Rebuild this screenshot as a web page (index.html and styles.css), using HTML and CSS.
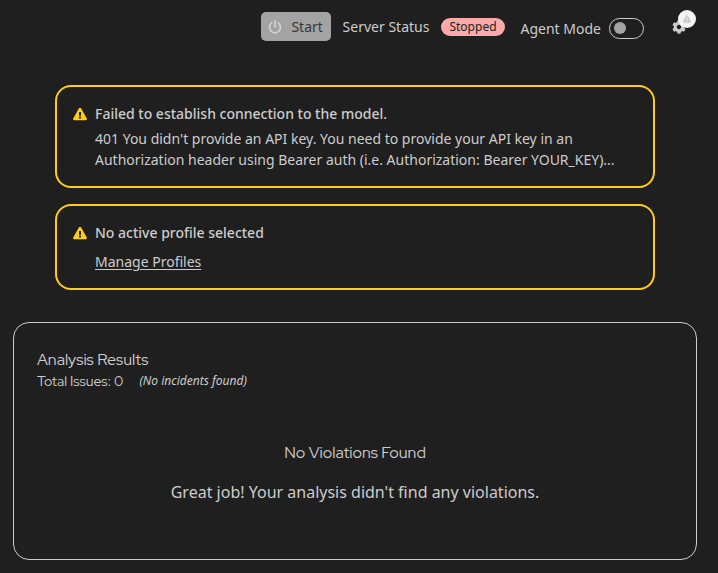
FILE: index.html
```html
<!DOCTYPE html>
<html lang="en">
<head>
<meta charset="utf-8">
<title>Analysis</title>
<link rel="stylesheet" href="styles.css">
</head>
<body>
<header class="toolbar">
  <button class="start" disabled>
    <svg class="power" viewBox="0 0 14 14"><path fill="none" stroke="currentColor" stroke-width="1.700" stroke-linecap="round" d="M3.700 2.900A5.500 5.500 0 1 0 10.300 2.900M7 .9V7"/></svg>
    <span>Start</span>
  </button>
  <span class="status-label">Server Status</span>
  <span class="badge">Stopped</span>
  <span class="agent-label">Agent Mode</span>
  <span class="switch"><span class="knob"></span></span>
  <span class="settings">
    <svg class="gear" viewBox="0 0 512 512"><path fill="currentColor" d="M487.400 315.700l-42.600-24.600c4.300-23.200 4.300-47 0-70.200l42.600-24.600c4.900-2.800 7.100-8.600 5.500-14-11.100-35.600-30-67.800-54.700-94.600-3.800-4.100-10-5.100-14.800-2.300L380.800 110c-17.900-15.400-38.500-27.300-60.800-35.100V25.800c0-5.600-3.900-10.500-9.400-11.700-36.700-8.200-74.300-7.800-109.200 0-5.500 1.200-9.400 6.100-9.400 11.700V75c-22.200 7.900-42.800 19.800-60.800 35.100L88.700 85.500c-4.900-2.800-11-1.900-14.800 2.300-24.700 26.700-43.600 58.900-54.700 94.600-1.700 5.400.6 11.200 5.500 14L67.300 221c-4.300 23.200-4.300 47 0 70.200l-42.600 24.600c-4.900 2.800-7.100 8.600-5.500 14 11.100 35.600 30 67.800 54.700 94.600 3.800 4.100 10 5.100 14.800 2.300l42.600-24.600c17.900 15.400 38.500 27.300 60.800 35.100v49.200c0 5.600 3.900 10.500 9.400 11.700 36.700 8.200 74.300 7.800 109.200 0 5.500-1.200 9.400-6.100 9.400-11.700v-49.200c22.200-7.900 42.800-19.800 60.800-35.100l42.600 24.600c4.900 2.800 11 1.900 14.800-2.300 24.700-26.700 43.600-58.900 54.700-94.600 1.500-5.500-.7-11.300-5.600-14.100zM256 336c-44.100 0-80-35.900-80-80s35.900-80 80-80 80 35.900 80 80-35.900 80-80 80z"/></svg>
    <span class="notice"><svg viewBox="0 0 10 10"><path d="M5 1.500C6.200 3.300 8.300 6 8.300 7.800Q8.300 8.600 7.500 8.600H2.500Q1.700 8.600 1.700 7.800C1.700 6 3.800 3.300 5 1.500Z" fill="#c9c9c9" stroke="#c9c9c9" stroke-width="1" stroke-linejoin="round"/><path d="M5 3.500V6M5 7V8" stroke="#f5f5f5" stroke-width="1"/></svg></span>
  </span>
</header>
<main>
  <section class="alert first">
    <svg class="warn" viewBox="0 0 576 512"><path fill="currentColor" d="M569.500 440C588 472 564.800 512 527.900 512H48.100c-36.900 0-60-40.100-41.600-72L246.400 24c18.500-32 64.700-32 83.200 0l239.900 416zM288 354c-25.400 0-46 20.600-46 46s20.600 46 46 46 46-20.600 46-46-20.600-46-46-46zm-43.700-165.300l7.400 136c.4 6.400 5.600 11.300 12 11.300h48.500c6.400 0 11.600-5 12-11.300l7.400-136c.4-6.900-5.100-12.700-12-12.700h-63.400c-6.900 0-12.300 5.800-11.900 12.700z"/></svg>
    <div><h2>Failed to establish connection to the model.</h2>
    <p>401 You didn't provide an API key. You need to provide your API key in an<br>Authorization header using Bearer auth (i.e. Authorization: Bearer YOUR_KEY)...</p></div>
  </section>
  <section class="alert second">
    <svg class="warn" viewBox="0 0 576 512"><path fill="currentColor" d="M569.500 440C588 472 564.800 512 527.900 512H48.100c-36.900 0-60-40.100-41.600-72L246.400 24c18.500-32 64.700-32 83.200 0l239.900 416zM288 354c-25.400 0-46 20.600-46 46s20.600 46 46 46 46-20.600 46-46-20.600-46-46-46zm-43.700-165.300l7.400 136c.4 6.400 5.600 11.300 12 11.300h48.500c6.400 0 11.600-5 12-11.300l7.400-136c.4-6.900-5.100-12.700-12-12.700h-63.400c-6.900 0-12.300 5.800-11.900 12.700z"/></svg>
    <div><h2>No active profile selected</h2>
    <p class="action"><a href="#">Manage Profiles</a></p></div>
  </section>
  <section class="results">
    <h1><span>Analysis Results</span></h1>
    <div class="summary"><span class="total">Total Issues: 0</span><em>(No incidents found)</em></div>
    <h3><span>No Violations Found</span></h3>
    <p class="great">Great job! Your analysis didn't find any violations.</p>
  </section>
</main>
</body>
</html>
```
FILE: styles.css
```css
* { box-sizing: border-box; }
body { margin: 0; width: 718px; height: 573px; overflow: hidden; background: #1f1f1f; color: #ccc; font: 14px/21px "Noto Sans", sans-serif; }
h1, h2, h3, p { margin: 0; font-weight: 400; }
.toolbar { height: 85px; display: flex; align-items: flex-start; padding: 12px 0 0 261px; }
.start { width: 70px; height: 29px; padding: 0 0 0 7px; display: flex; align-items: center; gap: 9.4px; border: 0; border-radius: 5px; background: #a3a3a3; color: #383838; font: inherit; }
.power { width: 14px; height: 14px; color: #d2d2d2; }
.status-label { margin: 4px 0 0 11.6px; width: 87px; white-space: nowrap; }
.badge { margin: 6px 0 0 11.4px; width: 64px; height: 18px; border-radius: 9px; background: #fbaaaa; color: #222; font-size: 12px; line-height: 18px; text-align: center; }
.agent-label { margin: 6px 0 0 15.5px; width: 80.5px; white-space: nowrap; }
.switch { margin: 6px 0 0 8px; width: 35px; height: 21px; border: 1px solid #ccc; border-radius: 11px; padding: 3px 4px; }
.knob { display: block; width: 12px; height: 12px; border-radius: 50%; background: #a3a3a3; }
.settings { position: relative; margin: 8px 0 0 28px; width: 24px; height: 16px; }
.gear { display: block; width: 14px; height: 14px; }
.notice { position: absolute; left: 6px; top: -10px; width: 18px; height: 18px; border-radius: 50%; background: #f5f5f5; }
.notice svg { display: block; width: 10px; height: 10px; margin: 4px; }
.alert { width: 600px; margin-left: 55px; border: 2px solid #ffcc17; border-radius: 16px; display: flex; gap: 8px; padding: 16px; }
.first { height: 103px; }
.second { height: 86px; margin-top: 16px; }
.warn { flex: none; width: 14px; height: 14px; margin-top: 4px; color: #ffcc17; }
.alert h2 { font-size: 14px; font-weight: 500; line-height: 21px; }
.alert p { margin-top: 4px; white-space: nowrap; }
.alert .action { margin-top: 8px; }
a { color: inherit; text-underline-offset: 2px; }
.results { width: 684px; height: 238px; margin: 32px 0 0 13px; border: 1px solid #ccc; border-radius: 16px; padding: 26px 23px; }
h1, h3, .total { font-family: "Red Hat Display", Lato, sans-serif; }
h1 { font-size: 16px; line-height: 21px; }
.summary { display: flex; gap: 16px; line-height: 21px; }
.summary .total { line-height: 23px; height: 21px; }
.summary em { font-size: 12px; }
h3 { margin-top: 50px; font-size: 16px; line-height: 24px; text-align: center; }
.great { margin-top: 15px; font-size: 16px; line-height: 24px; text-align: center; }
```
